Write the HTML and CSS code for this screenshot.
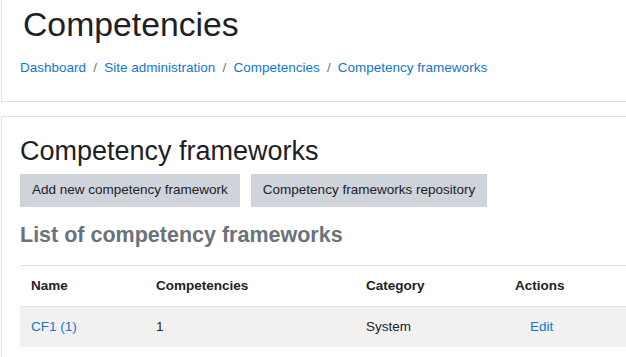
FILE: index.html
```html
<!DOCTYPE html>
<html lang="en">
<head>
<meta charset="utf-8">
<title>Competency frameworks</title>
<link rel="stylesheet" href="styles.css">
</head>
<body>
<div class="page">
  <header class="card header-card">
    <h1 class="page-title">Competencies</h1>
    <nav class="breadcrumb">
      <a href="#">Dashboard</a>
      <span class="sep">/</span>
      <a href="#">Site administration</a>
      <span class="sep">/</span>
      <a href="#">Competencies</a>
      <span class="sep">/</span>
      <a href="#">Competency frameworks</a>
    </nav>
  </header>

  <main class="card main-card">
    <h2 class="section-title">Competency frameworks</h2>
    <div class="actions">
      <button class="btn">Add new competency framework</button>
      <button class="btn">Competency frameworks repository</button>
    </div>
    <h3 class="list-title">List of competency frameworks</h3>
    <table class="table">
      <thead>
        <tr>
          <th class="col-name">Name</th>
          <th class="col-comp">Competencies</th>
          <th class="col-cat">Category</th>
          <th class="col-act">Actions</th>
        </tr>
      </thead>
      <tbody>
        <tr>
          <td><a href="#">CF1 (1)</a></td>
          <td>1</td>
          <td>System</td>
          <td><a href="#" class="edit">Edit</a></td>
        </tr>
      </tbody>
    </table>
  </main>
</div>
</body>
</html>
```

FILE: styles.css
```css
html, body {
  margin: 0;
  padding: 0;
  background: #ffffff;
  overflow: hidden;
}

body {
  font-family: "Liberation Sans", Arial, sans-serif;
  font-size: 13.5px;
  line-height: 1.5;
  color: #212529;
}

a {
  color: #1177d1;
  text-decoration: none;
}

.page {
  width: 700px;
  padding-left: 1px;
  display: flex;
  flex-direction: column;
  gap: 14px;
}

.card {
  border: 1px solid #e2e2e2;
  background: #fff;
}

.header-card {
  border-top: none;
  padding: 4px 18px 23px 18px;
}

.page-title {
  margin: 0 0 13px 3px;
  font-size: 33.75px;
  font-weight: 400;
  line-height: 1.2;
  color: #1d2125;
}

.breadcrumb {
  display: flex;
  align-items: baseline;
  line-height: 20px;
}

.breadcrumb .sep {
  color: #6c757d;
  padding: 0 7.2px;
}

.main-card {
  padding: 18px 18px 10px 18px;
}

.section-title {
  margin: 0 0 7px 0;
  font-size: 27px;
  font-weight: 400;
  line-height: 1.2;
  color: #1d2125;
}

.actions {
  display: flex;
  gap: 11px;
  margin-bottom: 16px;
}

.btn {
  font-family: inherit;
  font-size: 13.5px;
  line-height: 20px;
  padding: 6.5px 12px;
  border: none;
  border-radius: 0;
  background: #ced4da;
  color: #1d2125;
}

.list-title {
  margin: 0 0 16px 0;
  font-size: 21.5px;
  font-weight: 700;
  line-height: 1.2;
  color: #6a737b;
}

.table {
  width: 640px;
  border-collapse: collapse;
  table-layout: fixed;
}

.table th,
.table td {
  text-align: left;
  padding: 10px 11px;
  line-height: 20px;
  border-top: 1px solid #dee2e6;
  vertical-align: top;
}

.table th {
  font-weight: 700;
  color: #1d2125;
}

.table tbody tr {
  background: #f2f1f0;
}

.col-name { width: 103px; }
.col-comp { width: 188px; }
.col-cat { width: 127px; }

.edit {
  padding-left: 15px;
}
```
